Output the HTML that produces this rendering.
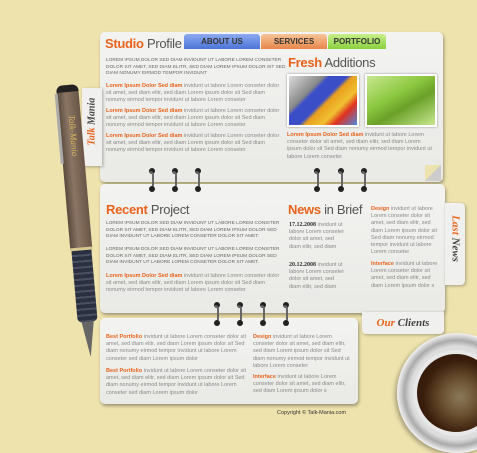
<!DOCTYPE html>
<html><head><meta charset="utf-8"><style>
*{margin:0;padding:0;box-sizing:border-box}
body{width:477px;height:436px;overflow:hidden;background:#eee2ad;font-family:"Liberation Sans",sans-serif;position:relative;font-size:5.5px;color:#8a8a8a;line-height:7.2px}
.p{position:absolute;background:linear-gradient(180deg,#f3f3f1,#e9e9e6);border-radius:5px;box-shadow:1px 2px 3px rgba(0,0,0,.35)}
.h{font-size:13px;line-height:16px;color:#555;position:absolute;letter-spacing:-0.3px}
.h b{color:#e8631c}
.cap{font-size:4.8px;line-height:6.6px;color:#666}
.o{color:#e8631c;font-weight:bold}
.t{position:absolute}
.tab{position:absolute;top:34px;height:15px;font-size:8px;font-weight:bold;color:#333;text-align:center;line-height:15px;border-radius:3px 3px 0 0}
.ring{position:absolute;width:8px;height:24px}
.ring:before{content:"";position:absolute;left:1px;top:0;width:6px;height:6px;border-radius:50%;background:#222}
.ring:after{content:"";position:absolute;left:1px;bottom:0;width:6px;height:6px;border-radius:50%;background:#222}
.ring i{position:absolute;left:2px;top:3px;width:4px;height:18px;border:2px solid #666;border-left:none;border-radius:0 4px 4px 0}
.side{position:absolute;background:#f0f0ee;box-shadow:1px 1px 3px rgba(0,0,0,.3);font-family:"Liberation Serif",serif;font-style:italic;font-weight:bold;color:#444}
</style></head><body>
<div class="p" style="left:100px;top:32px;width:343px;height:150px"></div>
<div class="side" style="left:82px;top:88px;width:20px;height:78px"><div style="transform:rotate(-90deg);position:absolute;left:-30px;top:30px;width:80px;font-size:10px;text-align:center"><span style="color:#e8631c">Talk</span> Mania</div></div>
<div class="tab" style="left:184px;width:76px;background:linear-gradient(#8eaaf0,#4a74d8)">ABOUT US</div>
<div class="tab" style="left:261px;width:66px;background:linear-gradient(#f7c59a,#e8864a)">SERVICES</div>
<div class="tab" style="left:328px;width:58px;background:linear-gradient(#c8f08a,#8ad040)">PORTFOLIO</div>
<div class="h" style="left:105px;top:36px"><b>Studio</b> Profile</div>
<div class="t cap" style="left:106px;top:58px;width:180px">LOREM IPSUM DOLOR SED DIAM INVIDUNT UT LABORE LOREM CONSETER DOLOR SIT AMET, SED DIAM ELITR, SED DIAM LOREM IPSUM DOLOR SIT SED DIAM NONUMY EIRMOD TEMPOR INVIDUNT</div>
<div class="t" style="left:106px;top:83px;width:180px"><span class="o">Lorem Ipsum Dolor Sed diam</span> invidunt ut labore Lorem conseter dolor sit amet, sed diam elitr, sed diam Lorem ipsum dolor sit Sed diam nonumy eirmod tempor invidunt ut labore Lorem conseter</div>
<div class="t" style="left:106px;top:108px;width:180px"><span class="o">Lorem Ipsum Dolor Sed diam</span> invidunt ut labore Lorem conseter dolor sit amet, sed diam elitr, sed diam Lorem ipsum dolor sit Sed diam nonumy eirmod tempor invidunt ut labore Lorem conseter</div>
<div class="t" style="left:106px;top:133px;width:180px"><span class="o">Lorem Ipsum Dolor Sed diam</span> invidunt ut labore Lorem conseter dolor sit amet, sed diam elitr, sed diam Lorem ipsum dolor sit Sed diam nonumy eirmod tempor invidunt ut labore Lorem conseter</div>
<div class="h" style="left:288px;top:55px"><b>Fresh</b> Additions</div>
<div class="t" style="left:287px;top:74px;width:72px;height:53px;border:2px solid #fff;background:linear-gradient(135deg,#ddd 0,#888 30%,#3a4ec8 35%,#3a4ec8 50%,#e8a020 55%,#f0c030 70%,#e03020 80%,#4a8ae0);box-shadow:0 0 2px #888"></div>
<div class="t" style="left:365px;top:74px;width:72px;height:53px;border:2px solid #fff;background:linear-gradient(150deg,#c8e890 0,#8cc840 40%,#6aa028 60%,#c8e890);box-shadow:0 0 2px #888"></div>
<div class="t" style="left:287px;top:132px;width:145px"><span class="o">Lorem Ipsum Dolor Sed diam</span> invidunt ut labore Lorem conseter dolor sit amet, sed diam elitr, sed diam Lorem ipsum dolor sit Sed diam nonumy eirmod tempor invidunt ut labore Lorem conseter</div>
<div class="t" style="left:425px;top:165px;width:16px;height:16px;background:linear-gradient(135deg,#eee2ad 50%,#ccc 50%)"></div>
<div class="p" style="left:100px;top:184px;width:345px;height:129px"></div>
<div class="side" style="left:445px;top:203px;width:20px;height:82px;border-radius:0 4px 4px 0"><div style="transform:rotate(90deg);position:absolute;left:-30px;top:32px;width:80px;font-size:11px;text-align:center"><span style="color:#e8631c">Last</span> News</div></div>
<div class="h" style="left:106px;top:202px"><b>Recent</b> Project</div>
<div class="t cap" style="left:106px;top:221px;width:180px">LOREM IPSUM DOLOR SED DIAM INVIDUNT UT LABORE LOREM CONSITER DOLOR SIT AMET, SED DIAM ELITR, SED DIAM LOREM IPSUM DOLOR SED DIAM INVIDUNT UT LABORE LOREM CONSETER DOLOR SIT AMET.</div>
<div class="t cap" style="left:106px;top:247px;width:180px">LOREM IPSUM DOLOR SED DIAM INVIDUNT UT LABORE LOREM CONSITER DOLOR SIT AMET, SED DIAM ELITR, SED DIAM LOREM IPSUM DOLOR SED DIAM INVIDUNT UT LABORE LOREM CONSETER DOLOR SIT AMET.</div>
<div class="t" style="left:106px;top:273px;width:180px"><span class="o">Lorem Ipsum Dolor Sed diam</span> invidunt ut labore Lorem conseter dolor sit amet, sed diam elitr, sed diam Lorem ipsum dolor sit Sed diam nonumy eirmod tempor invidunt ut labore Lorem conseter</div>
<div class="h" style="left:288px;top:202px"><b>News</b> in Brief</div>
<div class="t" style="left:289px;top:222px;width:58px"><b style="color:#333;font-family:'Liberation Serif',serif;font-size:6px">17.12.2008</b> invidunt ut labore Lorem conseter dolor sit amet, sed diam elitr, sed diam</div>
<div class="t" style="left:289px;top:262px;width:58px"><b style="color:#333;font-family:'Liberation Serif',serif;font-size:6px">20.12.2008</b> invidunt ut labore Lorem conseter dolor sit amet, sed diam elitr, sed diam</div>
<div class="t" style="left:371px;top:206px;width:70px"><span class="o">Design</span> invidunt ut labore Lorem conseter dolor sit amet, sed diam elitr, sed diam Lorem ipsum dolor sit Sed diam nonumy eirmod tempor invidunt ut labore Lorem conseter</div>
<div class="t" style="left:371px;top:261px;width:70px"><span class="o">Interface</span> invidunt ut labore Lorem conseter dolor sit amet, sed diam elitr, sed diam Lorem ipsum dolor s</div>
<div class="p" style="left:100px;top:318px;width:258px;height:86px"></div>
<div class="side" style="left:362px;top:312px;width:82px;height:22px;border-radius:0 0 4px 4px;font-size:11px;line-height:22px;text-align:center"><span style="color:#e8631c">Our</span> Clients</div>
<div class="t" style="left:106px;top:334px;width:140px"><span class="o">Best Portfolio</span> invidunt ut labore Lorem conseter dolor sit amet, sed diam elitr, sed diam Lorem ipsum dolor sit Sed diam nonumy eirmod tempor invidunt ut labore Lorem conseter sed diam Lorem ipsum dolor</div>
<div class="t" style="left:106px;top:368px;width:140px"><span class="o">Best Portfolio</span> invidunt ut labore Lorem conseter dolor sit amet, sed diam elitr, sed diam Lorem ipsum dolor sit Sed diam nonumy eirmod tempor invidunt ut labore Lorem conseter sed diam Lorem ipsum dolor</div>
<div class="t" style="left:253px;top:334px;width:100px"><span class="o">Design</span> invidunt ut labore Lorem conseter dolor sit amet, sed diam elitr, sed diam Lorem ipsum dolor sit Sed diam nonumy eirmod tempor invidunt ut labore Lorem conseter</div>
<div class="t" style="left:253px;top:374px;width:100px"><span class="o">Interface</span> invidunt ut labore Lorem conseter dolor sit amet, sed diam elitr, sed diam Lorem ipsum dolor s</div>
<div class="t" style="left:277px;top:410px;font-size:5.5px;color:#333">Copyright © Talk-Mania.com</div>
<div class="ring" style="left:148px;top:168px"><i></i></div>
<div class="ring" style="left:171px;top:168px"><i></i></div>
<div class="ring" style="left:194px;top:168px"><i></i></div>
<div class="ring" style="left:313px;top:168px"><i></i></div>
<div class="ring" style="left:337px;top:168px"><i></i></div>
<div class="ring" style="left:360px;top:168px"><i></i></div>
<div class="ring" style="left:213px;top:302px"><i></i></div>
<div class="ring" style="left:236px;top:302px"><i></i></div>
<div class="ring" style="left:259px;top:302px"><i></i></div>
<div class="ring" style="left:282px;top:302px"><i></i></div>
<div class="t" style="left:397px;top:333px;width:120px;height:120px;border-radius:50%;background:radial-gradient(circle,#ddd 55%,#aaa 62%,#eee 70%,#bbb 100%);box-shadow:-2px 2px 4px rgba(0,0,0,.3)"></div>
<div class="t" style="left:413px;top:350px;width:86px;height:86px;border-radius:50%;background:radial-gradient(circle at 55% 55%,#8a7a5a 0,#6a5030 30%,#3a1e0c 60%,#2a1206 100%);border:4px solid #e8e8e8"></div>
<!-- pen -->
<div class="t" style="left:56px;top:86px;width:22px;height:275px;transform:rotate(-5deg);transform-origin:top left">
<div style="position:absolute;top:0;left:0;width:22px;height:165px;border-radius:6px 6px 0 0;background:linear-gradient(90deg,#5a4a3c,#8a7565 40%,#6a5646)"></div>
<div style="position:absolute;top:0;left:0;width:22px;height:7px;background:#222;border-radius:6px 6px 0 0"></div>
<div style="position:absolute;top:8px;left:-2px;width:3px;height:70px;background:#aaa"></div>
<div style="position:absolute;top:30px;left:16px;transform:rotate(90deg);transform-origin:left top;white-space:nowrap;font-family:'Liberation Serif',serif;font-style:italic;font-size:9px;color:#d8b860">Talk-Mania</div>
<div style="position:absolute;top:163px;left:0;width:22px;height:3px;background:#d8c890"></div>
<div style="position:absolute;top:166px;left:1px;width:20px;height:72px;background:repeating-linear-gradient(#2a3040 0,#2a3040 4px,#4a5060 4px,#4a5060 6px);border-radius:0 0 5px 5px"></div>
<div style="position:absolute;top:238px;left:5px;width:0;height:0;border-left:6px solid transparent;border-right:6px solid transparent;border-top:35px solid #666"></div>
</div>
</body></html>
